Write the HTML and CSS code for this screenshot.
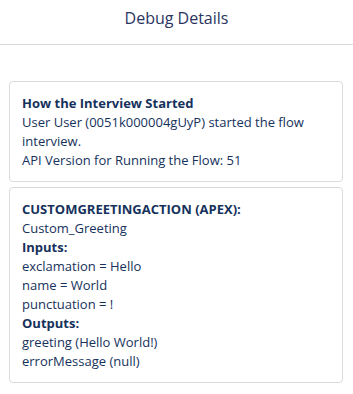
FILE: index.html
```html
<!DOCTYPE html>
<html lang="en">
<head>
    <meta charset="UTF-8">
    <title>Debug Details</title>
    <link rel="stylesheet" href="styles.css">
</head>
<body>
    <!-- Header -->
    <header class="panel-header">
        <h2 class="panel-title">Debug Details</h2>
    </header>

    <section class="debug-body">
        <div class="debug-card">
            <div class="card-heading">How the Interview Started</div>
            <div>User User (0051k000004gUyP) started the flow interview.</div>
            <div>API Version for Running the Flow: 51</div>
        </div>

        <div class="debug-card">
            <div class="card-heading">CUSTOMGREETINGACTION (APEX):</div>
            <div>Custom_Greeting</div>
            <div class="card-heading">Inputs:</div>
            <div>exclamation = Hello</div>
            <div>name = World</div>
            <div>punctuation = !</div>
            <div class="card-heading">Outputs:</div>
            <div>greeting (Hello World!)</div>
            <div>errorMessage (null)</div>
        </div>
    </section>
</body>
</html>
```

FILE: styles.css
```css
/* Base */
* {
    margin: 0;
    padding: 0;
    box-sizing: border-box;
}

body {
    font-family: 'Open Sans', 'Liberation Sans', sans-serif;
    font-size: 13px;
    line-height: 19px;
    color: #16325c;
    background-color: #ffffff;
}

/* Header */
.panel-header {
    height: 45px;
    border-bottom: 1px solid #dddbda;
    display: flex;
    align-items: center;
    justify-content: center;
}

.panel-title {
    font-size: 16px;
    font-weight: 400;
    color: #2b3460;
    margin-top: -8px;
}

/* Cards */
.debug-body {
    padding: 36px 10px 0 9px;
    display: flex;
    flex-direction: column;
    gap: 5px;
}

.debug-card {
    border: 1px solid #dddbda;
    border-radius: 4px;
    padding: 12px 12px 11px 12px;
}

.card-heading {
    font-weight: 700;
    color: #16325c;
}
```
